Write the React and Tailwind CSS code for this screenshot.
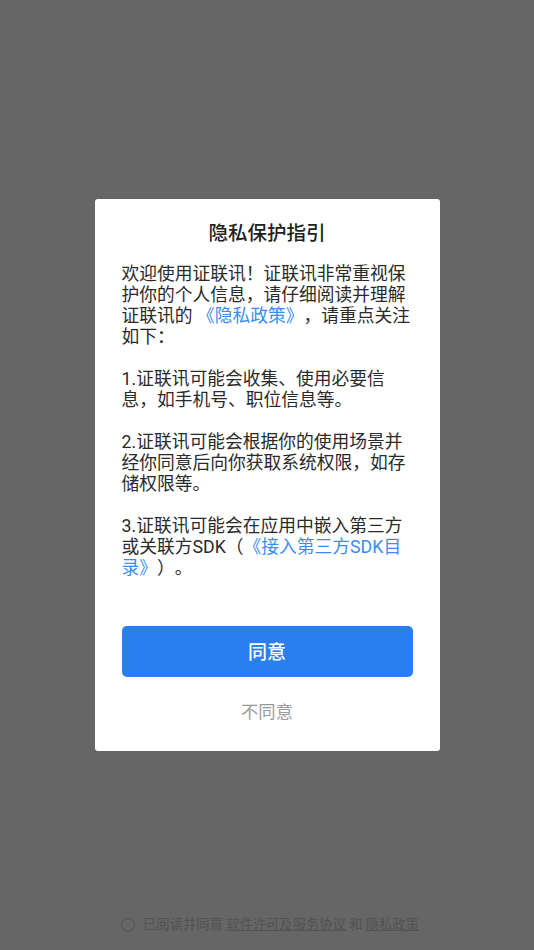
const font = { fontFamily: 'Roboto, "Noto Sans CJK SC", sans-serif' };

// full-width punctuation kept at 1em so the browser can't squeeze pairs like 》，
function Punct({ children }) {
  return <span className="inline-block w-[1em] text-left">{children}</span>;
}

function Link({ children }) {
  return <span className="text-[#3a8bf3]">{children}</span>;
}

export default function App() {
  return (
    <div
      className="w-[534px] h-[950px] bg-[#666666] flex flex-col items-center overflow-hidden"
      style={font}
    >
      {/* dialog */}
      <div className="mt-[199px] w-[345px] bg-white rounded-[3px] px-[27px] pt-[21px] pb-[27px] flex flex-col">
        <h1 className="text-center text-[19.5px] leading-[27px] font-medium text-[#222222]">
          隐私保护指引
        </h1>

        <div className="mt-[17px] text-[17.75px] leading-[21px] text-[#2a2a2a] whitespace-nowrap">
          <p>
            <span className="block">欢迎使用证联讯！证联讯非常重视保</span>
            <span className="block">护你的个人信息，请仔细阅读并理解</span>
            <span className="block">
              证联讯的{" "}
              <Link>
                <Punct>《</Punct>隐私政策<Punct>》</Punct>
              </Link>
              <Punct>，</Punct>请重点关注
            </span>
            <span className="block">如下：</span>
          </p>
          <p className="mt-[21px]">
            <span className="block">1.证联讯可能会收集、使用必要信</span>
            <span className="block">息，如手机号、职位信息等。</span>
          </p>
          <p className="mt-[21px]">
            <span className="block">2.证联讯可能会根据你的使用场景并</span>
            <span className="block">经你同意后向你获取系统权限，如存</span>
            <span className="block">储权限等。</span>
          </p>
          <p className="mt-[21px]">
            <span className="block">3.证联讯可能会在应用中嵌入第三方</span>
            <span className="block">
              或关联方SDK<Punct>（</Punct>
              <Link>
                <Punct>《</Punct>接入第三方SDK目
              </Link>
            </span>
            <span className="block">
              <Link>
                录<Punct>》</Punct>
              </Link>
              <Punct>）</Punct>
              <Punct>。</Punct>
            </span>
          </p>
        </div>

        <button className="mt-[47px] h-[51px] w-full rounded-[5px] bg-[#2a7ff0] pt-[3px] text-white text-[19px] font-medium">
          同意
        </button>
        <button className="mt-[23px] h-[24px] text-[17.3px] leading-[24px] text-[#9a9a9a]">
          不同意
        </button>
      </div>

      {/* agreement line behind the overlay */}
      <div className="mt-[165px] ml-[6px] flex items-center gap-[8px] text-[13.3px] leading-[18px] text-[#525252]">
        <span className="w-[14px] h-[14px] rounded-full border-[1.5px] border-[#525252]" />
        <span>
          已阅读并同意 <span className="underline">软件许可及服务协议</span> 和{" "}
          <span className="underline">隐私政策</span>
        </span>
      </div>
    </div>
  );
}
